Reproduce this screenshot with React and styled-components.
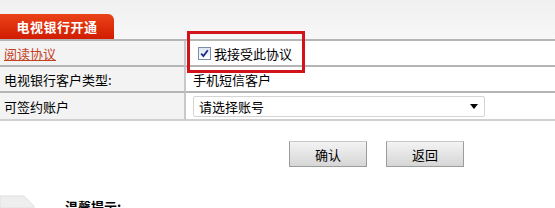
import React from "react";
import styled, { createGlobalStyle } from "styled-components";

const Global = createGlobalStyle`
  html, body { margin: 0; padding: 0; background: #fff; }
  body { font-family: "Noto Sans CJK SC", "Liberation Sans", sans-serif; font-size: 13px; color: #000; overflow: hidden; }
`;

const Page = styled.div`
  width: 555px;
  height: 208px;
  position: relative;
  overflow: hidden;
`;

const Header = styled.div`
  height: 39px;
  background: linear-gradient(#f0f0f0, #f7f7f7);
  display: flex;
  align-items: flex-end;
  border-bottom: 2px solid #b5b5b5;
`;

const Tab = styled.div`
  width: 114px;
  height: 25px;
  background: linear-gradient(#ea4318, #d11c00);
  border-top-right-radius: 6px;
  color: #fff;
  font-weight: bold;
  font-size: 13px;
  display: flex;
  align-items: center;
  justify-content: center;
  letter-spacing: 0.5px;
`;

const Table = styled.div`
  display: grid;
  grid-template-columns: 186px 1fr;
`;

const Label = styled.div`
  height: ${(p) => p.h}px;
  background: #f3f3f3;
  border-right: 2px solid #c9c9c9;
  border-bottom: 2px solid ${(p) => (p.last ? "#d0d0d0" : "#b5b5b5")};
  display: flex;
  align-items: center;
  padding-left: 4px;
  box-sizing: content-box;
`;

const Value = styled.div`
  height: ${(p) => p.h}px;
  background: #fff;
  border-bottom: 2px solid ${(p) => (p.last ? "#d0d0d0" : "#b5b5b5")};
  display: flex;
  align-items: center;
  padding-left: 7px;
`;

const Link = styled.a`
  color: #c2401c;
  text-decoration: underline;
  cursor: pointer;
`;

const CheckLabel = styled.label`
  display: flex;
  align-items: center;
  gap: 3px;
  padding-left: 5px;
`;

const Check = styled.span`
  width: 11px;
  height: 11px;
  border: 1px solid #7a8ea8;
  background: linear-gradient(#dde6f0, #fff);
  display: inline-flex;
  align-items: center;
  justify-content: center;
`;

const Highlight = styled.div`
  position: absolute;
  left: 187px;
  top: 31px;
  width: 112px;
  height: 36px;
  border: 3px solid #d3131b;
  pointer-events: none;
`;

const Select = styled.div`
  width: 292px;
  height: 21px;
  border: 1px solid #d4d4d4;
  border-radius: 2px;
  display: flex;
  align-items: center;
  justify-content: space-between;
  padding: 0 6px 0 5px;
  box-sizing: border-box;
  font-size: 13px;
`;

const Buttons = styled.div`
  display: flex;
  gap: 19px;
  padding-left: 289px;
  margin-top: 20px;
`;

const Button = styled.button`
  width: 78px;
  height: 26px;
  border: 1px solid #9c9c9c;
  border-top-color: #c8c8c8;
  background: linear-gradient(#f3f3f3, #d6d6d6);
  font-family: "Noto Sans CJK SC", sans-serif;
  font-size: 13px;
  color: #000;
  padding: 0;
`;

const Tip = styled.div`
  position: absolute;
  left: 0;
  top: 188px;
  display: flex;
  align-items: flex-start;
`;

const TipText = styled.div`
  position: absolute;
  left: 65px;
  top: 197px;
  font-size: 13px;
  font-weight: bold;
`;

export default function App() {
  return (
    <Page>
      <Global />
      <Header>
        <Tab>电视银行开通</Tab>
      </Header>
      <Table>
        <Label h={24}><Link>阅读协议</Link></Label>
        <Value h={24}>
          <CheckLabel>
            <Check>
              <svg width="9" height="9" viewBox="0 0 9 9">
                <path d="M1.2 4.6 L3.4 7 L7.8 1.2" stroke="#1b2a8a" strokeWidth="1.8" fill="none" />
              </svg>
            </Check>
            我接受此协议
          </CheckLabel>
        </Value>
        <Label h={24}>电视银行客户类型:</Label>
        <Value h={24}>手机短信客户</Value>
        <Label h={26} last>可签约账户</Label>
        <Value h={26} last>
          <Select>
            <span>请选择账号</span>
            <svg width="8" height="5" viewBox="0 0 8 5"><path d="M0 0 H8 L4 5 Z" fill="#000" /></svg>
          </Select>
        </Value>
      </Table>
      <Buttons>
        <Button>确认</Button>
        <Button>返回</Button>
      </Buttons>
      <Highlight />
      <Tip>
        <svg width="60" height="20" viewBox="0 0 60 20">
          <path d="M0 8 H24 L34 18 V20 H0 Z" fill="#eeeeee" stroke="#e0e0e0" />
        </svg>
      </Tip>
      <TipText>温馨提示:</TipText>
    </Page>
  );
}
